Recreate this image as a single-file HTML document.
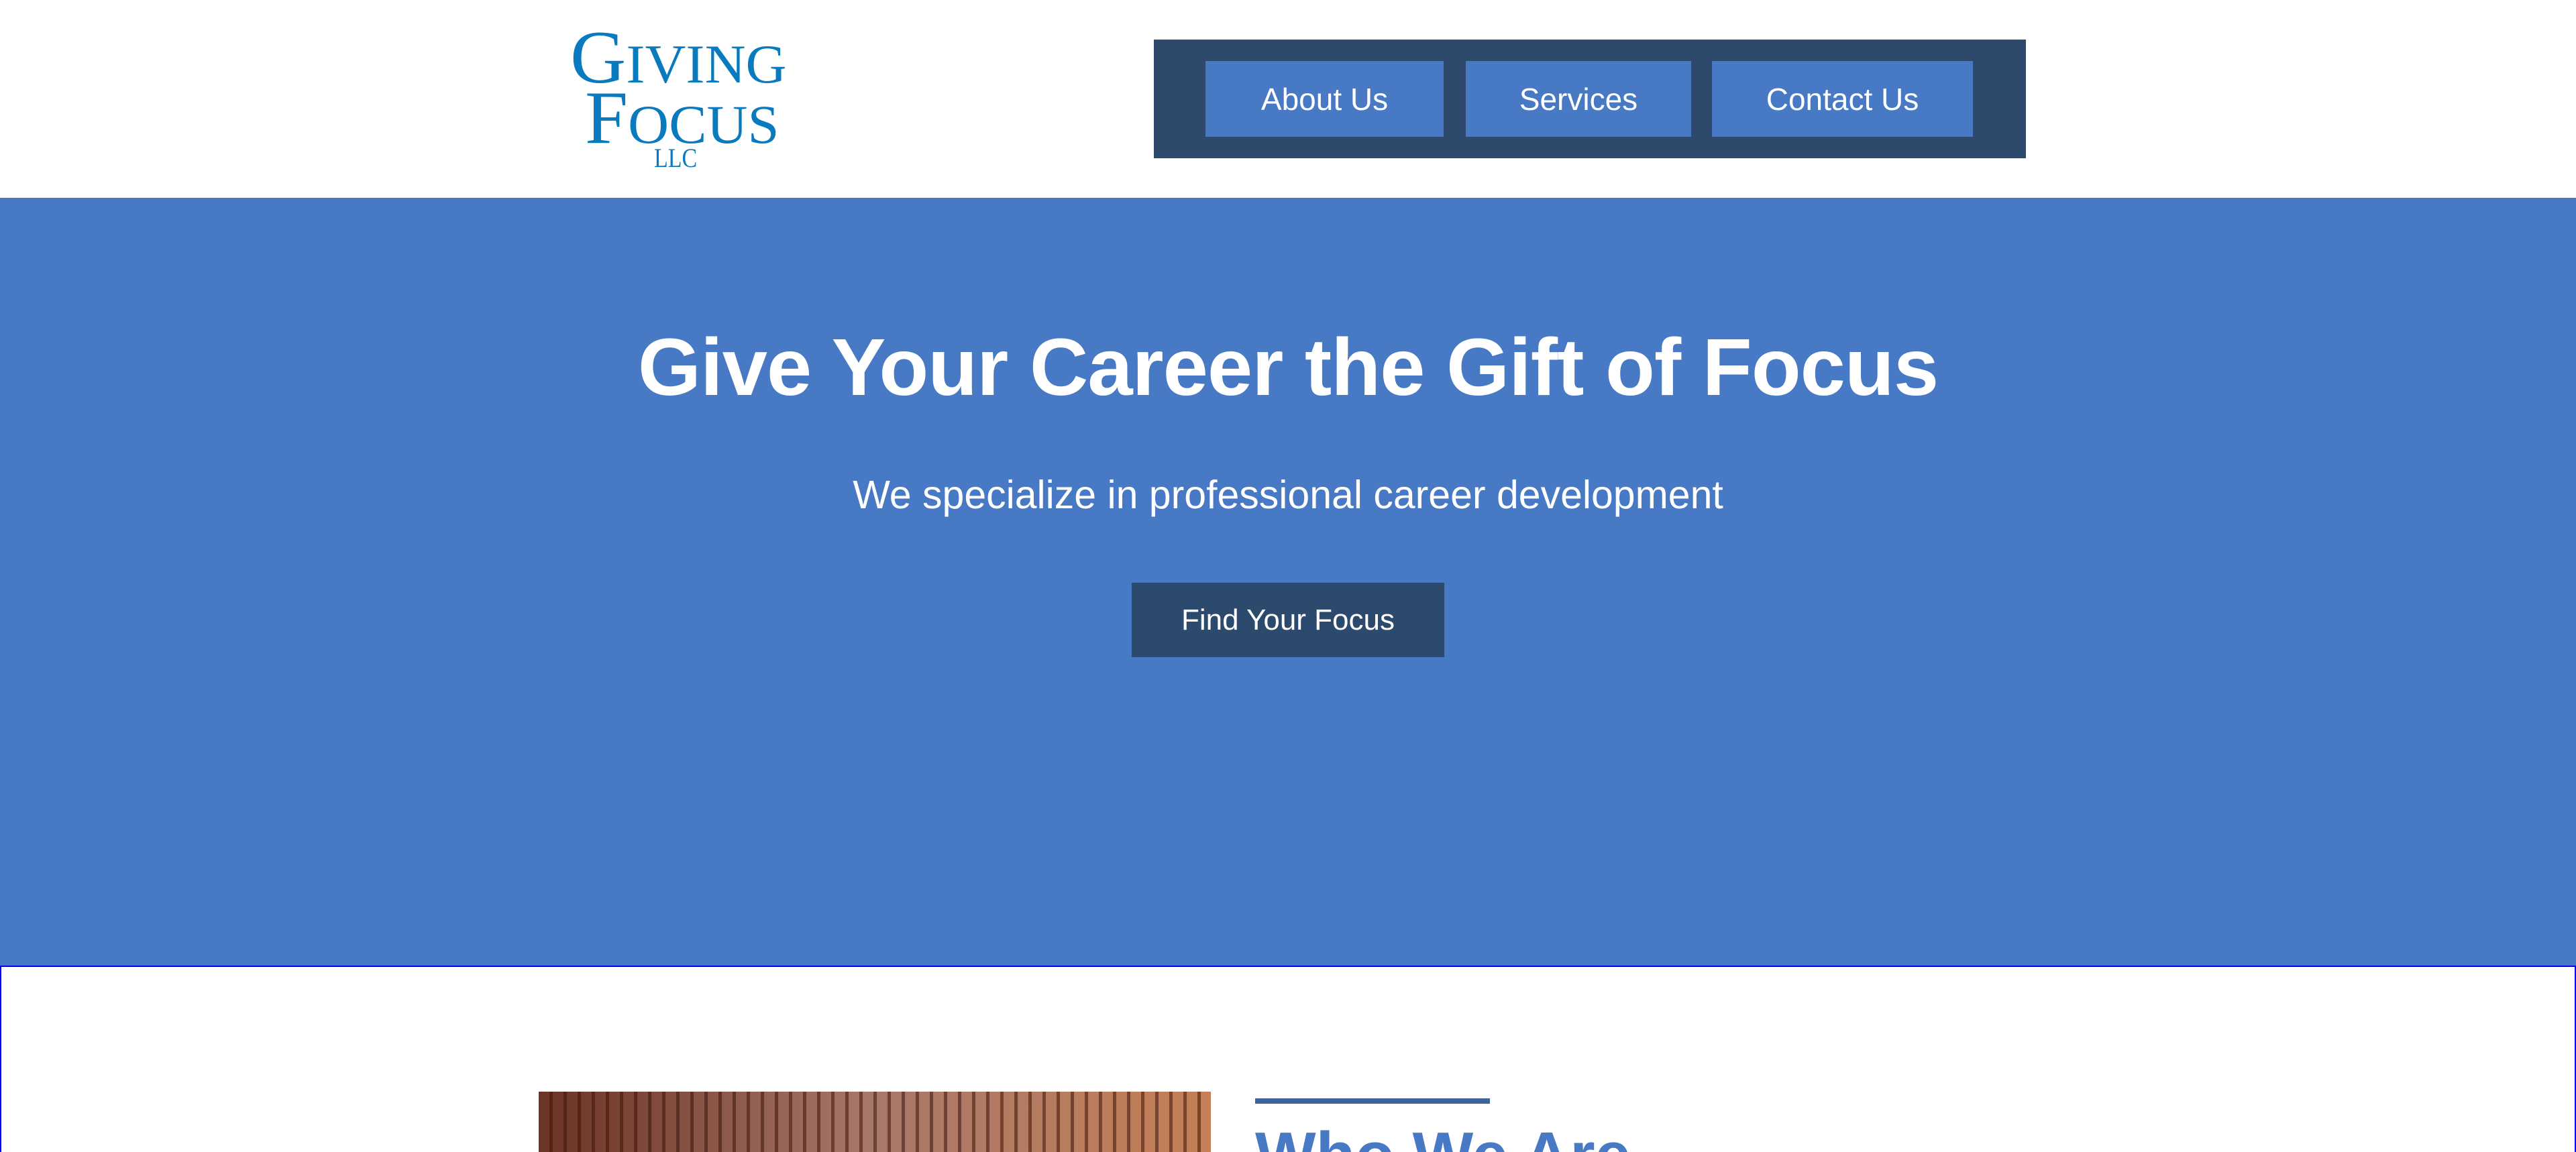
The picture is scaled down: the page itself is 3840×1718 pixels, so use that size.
<!DOCTYPE html>
<html><head><meta charset="utf-8"><style>
*{margin:0;padding:0;box-sizing:border-box}
html,body{width:3840px;height:1718px;overflow:hidden}
body{background:#fff;font-family:"Liberation Sans",sans-serif;position:relative}
.abs{position:absolute}
.logo{color:#0a7abf;font-family:"Liberation Serif",serif;transform-origin:left top;white-space:nowrap;line-height:1}
.nav{left:1720px;top:59px;width:1300px;height:177px;background:#2d4a6d}
.btn{top:91px;height:113px;background:#4779c4;color:#fff;font-size:46px;display:flex;align-items:center;justify-content:center}
.hero{left:0;top:295px;width:3840px;height:1145px;background:#4779c4}
.sec{left:0;top:1440px;width:3840px;height:278px;border:2px solid #0000ff;border-bottom:none;background:#fff}
</style></head><body>
<div class="abs logo" style="left:850px;top:30px;font-size:112px;transform:scale(1.03,1)">G<span style="font-size:82px">IVING</span></div>
<div class="abs logo" style="left:872px;top:120px;font-size:112px;transform:scale(1.03,1)">F<span style="font-size:82px">OCUS</span></div>
<div class="abs logo" style="left:975px;top:216px;font-size:40px;transform:scale(0.85,1)">LLC</div>

<div class="abs nav"></div>
<div class="abs btn" style="left:1797px;width:355px">About Us</div>
<div class="abs btn" style="left:2185px;width:336px">Services</div>
<div class="abs btn" style="left:2552px;width:389px">Contact Us</div>

<div class="abs hero"></div>
<div class="abs" style="left:0;width:3840px;top:472px;text-align:center;color:#fff;font-weight:bold;font-size:121px;letter-spacing:-1px;line-height:150px">Give Your Career the Gift of Focus</div>
<div class="abs" style="left:0;width:3840px;top:703px;text-align:center;color:#fff;font-size:59px;line-height:70px">We specialize in professional career development</div>
<div class="abs" style="left:1687px;top:869px;width:466px;height:111px;background:#2c4a6e;color:#fff;font-size:44px;display:flex;align-items:center;justify-content:center">Find Your Focus</div>

<div class="abs sec"></div>
<div class="abs" style="left:803px;top:1628px;width:1002px;height:90px;background:repeating-linear-gradient(90deg,rgba(0,0,0,0) 0 16px,rgba(60,20,10,.55) 16px 21px),linear-gradient(90deg,#6b3324,#a8786a 50%,#c47f55)"></div>
<div class="abs" style="left:1871px;top:1638px;width:350px;height:8px;background:#3d6399"></div>
<div class="abs" style="left:1871px;top:1668px;color:#4779c4;font-weight:bold;font-size:96px;line-height:110px">Who We Are</div>
</body></html>
